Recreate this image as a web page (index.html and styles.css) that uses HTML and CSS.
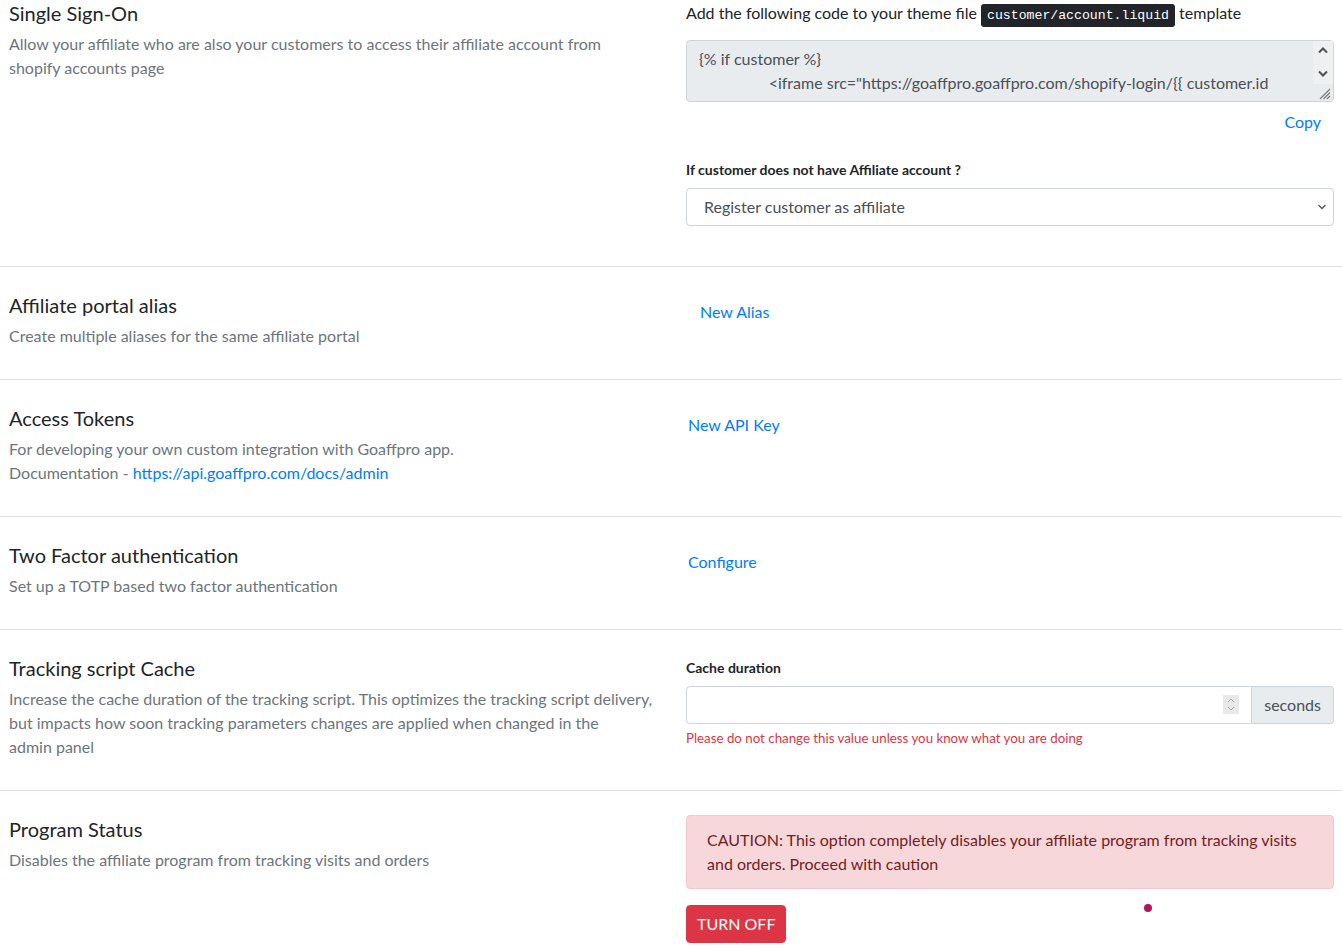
FILE: index.html
```html
<!DOCTYPE html>
<html lang="en">
<head>
<meta charset="utf-8">
<title>Settings</title>
<link rel="stylesheet" href="styles.css">
</head>
<body>
<div class="page">

  <section class="setting first">
    <div class="info">
      <h2 class="title">Single Sign-On</h2>
      <p class="desc">Allow your affiliate who are also your customers to access their affiliate account from<br>shopify accounts page</p>
    </div>
    <div class="control">
      <p class="instr">Add the following code to your theme file <kbd class="kbd">customer/account.liquid</kbd> template</p>
      <div class="code-wrap">
        <textarea class="code" readonly rows="2">{% if customer %}
                 <iframe src="https://goaffpro.goaffpro.com/shopify-login/{{ customer.id }}/{{customer.email|url_encode}}/{{shop.permanent_domain}}" style="display:none"></iframe>
{% endif %}</textarea>
        <div class="fake-scroll">
          <svg class="sarrow" width="12" height="8" viewBox="0 0 12 8"><path d="M2 6.5 L6 2.5 L10 6.5" fill="none" stroke="#505050" stroke-width="2"/></svg>
          <svg class="sarrow" width="12" height="8" viewBox="0 0 12 8"><path d="M2 1.5 L6 5.5 L10 1.5" fill="none" stroke="#505050" stroke-width="2"/></svg>
        </div>
        <svg class="grip" width="14" height="14" viewBox="0 0 14 14"><path d="M13 3 L3 13 M13 6.5 L6.5 13 M13 10 L10 13" stroke="#7a7a7a" stroke-width="1.2" fill="none"/></svg>
      </div>
      <div class="copy-row"><button class="link-btn copy">Copy</button></div>
      <label class="lbl">If customer does not have Affiliate account ?</label>
      <div class="select-wrap">
        <select class="select">
          <option>Register customer as affiliate</option>
          <option>Do nothing</option>
        </select>
        <svg class="chev" width="10" height="6" viewBox="0 0 10 6"><path d="M1.5 1 L5 4.5 L8.5 1" fill="none" stroke="#555" stroke-width="1.3"/></svg>
      </div>
    </div>
  </section>

  <section class="setting">
    <div class="info">
      <h2 class="title">Affiliate portal alias</h2>
      <p class="desc">Create multiple aliases for the same affiliate portal</p>
    </div>
    <div class="control">
      <button class="link-btn alias">New Alias</button>
    </div>
  </section>

  <section class="setting">
    <div class="info">
      <h2 class="title">Access Tokens</h2>
      <p class="desc">For developing your own custom integration with Goaffpro app.<br>Documentation - <a class="link" href="#">https://api.goaffpro.com/docs/admin</a></p>
    </div>
    <div class="control">
      <button class="link-btn">New API Key</button>
    </div>
  </section>

  <section class="setting">
    <div class="info">
      <h2 class="title">Two Factor authentication</h2>
      <p class="desc">Set up a TOTP based two factor authentication</p>
    </div>
    <div class="control">
      <button class="link-btn">Configure</button>
    </div>
  </section>

  <section class="setting">
    <div class="info">
      <h2 class="title">Tracking script Cache</h2>
      <p class="desc">Increase the cache duration of the tracking script. This optimizes the tracking script delivery,<br>but impacts how soon tracking parameters changes are applied when changed in the<br>admin panel</p>
    </div>
    <div class="control">
      <label class="lbl">Cache duration</label>
      <div class="input-group">
        <div class="num-wrap">
          <input class="num" type="number">
          <div class="spin">
            <svg width="8" height="5" viewBox="0 0 8 5"><path d="M1 4 L4 1 L7 4" fill="none" stroke="#a8a8a8" stroke-width="1"/></svg>
            <svg width="8" height="5" viewBox="0 0 8 5"><path d="M1 1 L4 4 L7 1" fill="none" stroke="#a8a8a8" stroke-width="1"/></svg>
          </div>
        </div>
        <span class="addon">seconds</span>
      </div>
      <small class="warn">Please do not change this value unless you know what you are doing</small>
    </div>
  </section>

  <section class="setting last">
    <div class="info">
      <h2 class="title">Program Status</h2>
      <p class="desc">Disables the affiliate program from tracking visits and orders</p>
    </div>
    <div class="control">
      <div class="alert">CAUTION: This option completely disables your affiliate program from tracking visits and orders. Proceed with caution</div>
      <button class="danger-btn">TURN OFF</button>
    </div>
  </section>

  <span class="dot"></span>
</div>
</body>
</html>
```

FILE: styles.css
```css
html, body {
  margin: 0;
  padding: 0;
  overflow: hidden;
  background: #fff;
}

body {
  font-family: Lato, "Liberation Sans", sans-serif;
  font-size: 16px;
  line-height: 24px;
  color: #212529;
}

.page {
  position: relative;
}

.setting {
  display: grid;
  grid-template-columns: 648px 648px;
  column-gap: 29px;
  padding: 26px 8px 24px 9px;
  border-bottom: 1px solid #dee2e6;
}

.setting.first {
  padding-top: 1px;
}

.setting.last {
  border-bottom: none;
}

.title {
  margin: 0 0 7px;
  font-size: 20px;
  line-height: 24px;
  font-weight: 400;
  color: #212529;
}

.desc {
  margin: 0 0 7px;
  color: #6c757d;
}

.link {
  color: #007bff;
  text-decoration: none;
}

.control {
  display: flex;
  flex-direction: column;
  align-items: stretch;
}

.instr {
  margin: 0 0 15px;
}

.kbd {
  display: inline;
  font-family: "Liberation Mono", monospace;
  font-size: 13.2px;
  line-height: 17px;
  padding: 4px 6px;
  background: #212529;
  color: #fff;
  border-radius: 3px;
}

.code-wrap {
  position: relative;
}

.code {
  display: block;
  box-sizing: border-box;
  width: 100%;
  height: 62px;
  margin: 0;
  padding: 6px 34px 6px 12px;
  font-family: inherit;
  font-size: 16px;
  line-height: 24px;
  color: #495057;
  background: #e9ecef;
  border: 1px solid #ced4da;
  border-radius: 4px;
  resize: none;
  overflow: hidden;
  outline: none;
}

.fake-scroll {
  position: absolute;
  top: 1px;
  right: 1px;
  width: 20px;
  height: 43px;
  background: #eef0f2;
  display: flex;
  flex-direction: column;
  align-items: center;
  justify-content: space-between;
  padding: 5px 0 6px;
  box-sizing: border-box;
}

.sarrow {
  display: block;
}

.grip {
  position: absolute;
  right: 3px;
  bottom: 2px;
}

.copy-row {
  display: flex;
  justify-content: flex-end;
  margin-top: 2px;
  margin-bottom: 18px;
}

.link-btn {
  font-family: inherit;
  font-size: 16px;
  line-height: 24px;
  padding: 6px 2px 6px 1px;
  border: 1px solid transparent;
  background: none;
  color: #007bff;
  cursor: pointer;
  align-self: flex-start;
}

.link-btn.copy {
  padding: 5px 12px;
}

.link-btn.alias {
  margin-left: 12px;
}

.lbl {
  display: block;
  font-size: 14px;
  line-height: 24px;
  font-weight: 700;
  margin-bottom: 6px;
  color: #212529;
}

.select-wrap {
  position: relative;
  margin-bottom: 16px;
}

.select {
  display: block;
  box-sizing: border-box;
  width: 100%;
  height: 38px;
  padding: 6px 30px 6px 17px;
  font-family: inherit;
  font-size: 16px;
  line-height: 24px;
  color: #495057;
  background: #fff;
  border: 1px solid #ced4da;
  border-radius: 4px;
  -webkit-appearance: none;
  appearance: none;
  outline: none;
}

.chev {
  position: absolute;
  right: 7px;
  top: 16px;
  pointer-events: none;
}

.input-group {
  display: flex;
}

.num-wrap {
  position: relative;
  flex: 1;
}

.num {
  display: block;
  box-sizing: border-box;
  width: 100%;
  height: 38px;
  padding: 6px 12px;
  font-family: inherit;
  font-size: 16px;
  color: #495057;
  border: 1px solid #ced4da;
  border-radius: 4px 0 0 4px;
  outline: none;
  -moz-appearance: textfield;
}

.num::-webkit-inner-spin-button,
.num::-webkit-outer-spin-button {
  -webkit-appearance: none;
  margin: 0;
}

.spin {
  position: absolute;
  right: 13px;
  top: 9px;
  width: 16px;
  height: 19px;
  background: #e9e9ea;
  display: flex;
  flex-direction: column;
  align-items: center;
  justify-content: center;
  gap: 3px;
}

.spin svg {
  display: block;
}

.addon {
  display: flex;
  align-items: center;
  box-sizing: border-box;
  height: 38px;
  padding: 6px 12px;
  background: #e9ecef;
  color: #495057;
  border: 1px solid #ced4da;
  border-left: none;
  border-radius: 0 4px 4px 0;
}

.warn {
  display: block;
  margin-top: 5px;
  font-size: 13.3px;
  line-height: 19px;
  color: #dc3545;
}

.alert {
  margin-top: -2px;
  margin-bottom: 16px;
  padding: 12px 20px;
  background: #f8d7da;
  border: 1px solid #f5c6cb;
  border-radius: 4px;
  color: #721c24;
}

.danger-btn {
  align-self: flex-start;
  font-family: inherit;
  font-size: 16px;
  line-height: 24px;
  padding: 6px 10px;
  color: #fff;
  background: #dc3545;
  border: 1px solid #dc3545;
  border-radius: 4px;
  cursor: pointer;
}

.dot {
  position: absolute;
  left: 1144px;
  top: 904px;
  width: 8px;
  height: 8px;
  border-radius: 50%;
  background: #b2145f;
}
```
